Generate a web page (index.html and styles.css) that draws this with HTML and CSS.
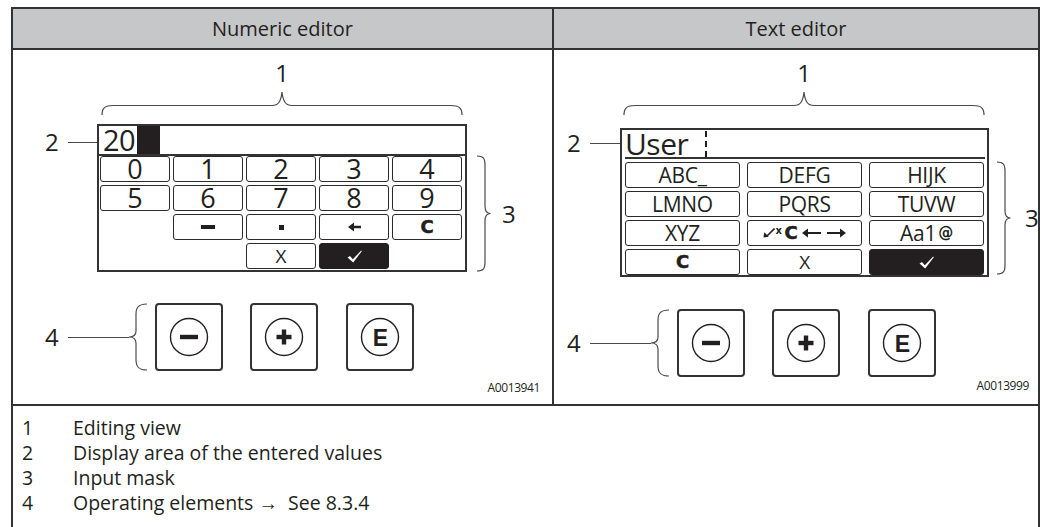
FILE: index.html
```html
<!DOCTYPE html>
<html lang="en">
  <head>
    <meta charset="UTF-8" />
    <meta name="viewport" content="width=device-width, initial-scale=1.0" />
    <title>Numeric editor and text editor</title>
    <link rel="stylesheet" href="styles.css">
  </head>
  <body>
    <div class="sheet">
      <div class="head">Numeric editor</div>
      <div class="head col-right">Text editor</div>

      <!-- numeric editor -->
      <div class="cell cell-numeric">
        <div class="figure">
          <div class="top-mark">
            <span class="callout">1</span>
            <svg class="brace-h" width="362" height="25" viewBox="0 0 362 25">
              <path d="M1 24 C1 17 4 14.5 12 14.5 L171 14.5 C177 14.5 180 11 181 1 C182 11 185 14.5 191 14.5 L350 14.5 C358 14.5 361 17 361 24" />
            </svg>
          </div>

          <div class="device">
            <div class="lead"><span class="callout">2</span><i class="leader"></i></div>
            <div class="screen">
              <div class="display">
                <span class="value">20</span><span class="cursor-block"></span>
              </div>
              <div class="keypad numpad">
                <div class="key">0</div>
                <div class="key">1</div>
                <div class="key">2</div>
                <div class="key">3</div>
                <div class="key">4</div>
                <div class="key">5</div>
                <div class="key">6</div>
                <div class="key">7</div>
                <div class="key">8</div>
                <div class="key">9</div>
                <div class="key blank"></div>
                <div class="key">
                  <svg width="14" height="4" viewBox="0 0 14 4"><rect width="14" height="4" /></svg>
                </div>
                <div class="key">
                  <svg width="5" height="5" viewBox="0 0 5 5"><rect width="5" height="5" /></svg>
                </div>
                <div class="key">
                  <svg width="13" height="10" viewBox="0 0 13 10"><path d="M0 5 L6 0.5 V3.8 H13 V6.2 H6 V9.5 Z" /></svg>
                </div>
                <div class="key"><span class="sym-c">C</span></div>
                <div class="key blank"></div>
                <div class="key blank"></div>
                <div class="key"><span class="sym-x">X</span></div>
                <div class="key enter">
                  <svg width="15" height="13" viewBox="0 0 15 13"><path d="M0.5 7.5 L3 6 L5.8 9.2 L14.2 0.6 L14.8 1.2 L6.2 12.5 Z" /></svg>
                </div>
              </div>
            </div>
            <div class="mask-mark">
              <svg class="brace-v" width="14" height="117" viewBox="0 0 14 117">
                <path d="M0 1 C6 1 8 3 8 10 L8 51 C8 56 10 58.5 13.5 58.5 C10 58.5 8 61 8 66 L8 107 C8 114 6 116 0 116" />
              </svg>
              <span class="callout">3</span>
            </div>
          </div>

          <div class="controls">
            <span class="callout">4</span><i class="leader long"></i>
            <svg class="brace-l" width="18" height="68" viewBox="0 0 18 68">
              <path d="M18 1 C10 1 7 4 7 11 L7 28 C7 32 5 34 0 34 C5 34 7 36 7 40 L7 57 C7 64 10 67 18 67" />
            </svg>
            <div class="op-btn">
              <svg width="40" height="40" viewBox="0 0 40 40">
                <circle cx="20" cy="20" r="18.5" class="ring" />
                <rect x="11" y="17.8" width="18" height="4.4" />
              </svg>
            </div>
            <div class="op-btn">
              <svg width="40" height="40" viewBox="0 0 40 40">
                <circle cx="20" cy="20" r="18.5" class="ring" />
                <rect x="12.5" y="17.8" width="15" height="4.4" />
                <rect x="17.8" y="12.5" width="4.4" height="15" />
              </svg>
            </div>
            <div class="op-btn">
              <svg width="40" height="40" viewBox="0 0 40 40">
                <circle cx="20" cy="20" r="18.5" class="ring" />
                <text x="20.5" y="28.5" class="op-letter">E</text>
              </svg>
            </div>
          </div>
        </div>
        <div class="fig-id">A0013941</div>
      </div>

      <!-- text editor -->
      <div class="cell cell-text col-right">
        <div class="figure">
          <div class="top-mark">
            <span class="callout">1</span>
            <svg class="brace-h" width="362" height="25" viewBox="0 0 362 25">
              <path d="M1 24 C1 17 4 14.5 12 14.5 L171 14.5 C177 14.5 180 11 181 1 C182 11 185 14.5 191 14.5 L350 14.5 C358 14.5 361 17 361 24" />
            </svg>
          </div>

          <div class="device">
            <div class="lead"><span class="callout">2</span><i class="leader"></i></div>
            <div class="screen">
              <div class="display">
                <span class="value">User</span><span class="cursor-dash"></span>
              </div>
              <div class="keypad textpad">
                <div class="key">ABC_</div>
                <div class="key">DEFG</div>
                <div class="key">HIJK</div>
                <div class="key">LMNO</div>
                <div class="key">PQRS</div>
                <div class="key">TUVW</div>
                <div class="key">XYZ</div>
                <div class="key tools">
                  <svg width="12" height="10" viewBox="0 0 12 10"><path d="M11.5 0.5 L4 8" class="stem" /><path d="M0.5 9.5 L1.2 4.2 L5.8 8.8 Z" /></svg><sup class="sym-sup">x</sup><span class="sym-c">C</span>
                  <svg width="44" height="10" viewBox="0 0 44 10"><path d="M0 5 L6 0.5 V4 H19 V6 H6 V9.5 Z" /><path d="M44 5 L38 0.5 V4 H25 V6 H38 V9.5 Z" /></svg>
                </div>
                <div class="key">Aa1<span class="sym-at">@</span></div>
                <div class="key"><span class="sym-c">C</span></div>
                <div class="key"><span class="sym-x">X</span></div>
                <div class="key enter">
                  <svg width="15" height="13" viewBox="0 0 15 13"><path d="M0.5 7.5 L3 6 L5.8 9.2 L14.2 0.6 L14.8 1.2 L6.2 12.5 Z" /></svg>
                </div>
              </div>
            </div>
            <div class="mask-mark">
              <svg class="brace-v" width="14" height="114" viewBox="0 0 14 114">
                <path d="M0 1 C6 1 8 3 8 10 L8 50 C8 55 10 57 13.5 57 C10 57 8 59 8 64 L8 104 C8 111 6 113 0 113" />
              </svg>
              <span class="callout">3</span>
            </div>
          </div>

          <div class="controls">
            <span class="callout">4</span><i class="leader long"></i>
            <svg class="brace-l" width="18" height="68" viewBox="0 0 18 68">
              <path d="M18 1 C10 1 7 4 7 11 L7 28 C7 32 5 34 0 34 C5 34 7 36 7 40 L7 57 C7 64 10 67 18 67" />
            </svg>
            <div class="op-btn">
              <svg width="40" height="40" viewBox="0 0 40 40">
                <circle cx="20" cy="20" r="18.5" class="ring" />
                <rect x="11" y="17.8" width="18" height="4.4" />
              </svg>
            </div>
            <div class="op-btn">
              <svg width="40" height="40" viewBox="0 0 40 40">
                <circle cx="20" cy="20" r="18.5" class="ring" />
                <rect x="12.5" y="17.8" width="15" height="4.4" />
                <rect x="17.8" y="12.5" width="4.4" height="15" />
              </svg>
            </div>
            <div class="op-btn">
              <svg width="40" height="40" viewBox="0 0 40 40">
                <circle cx="20" cy="20" r="18.5" class="ring" />
                <text x="20.5" y="28.5" class="op-letter">E</text>
              </svg>
            </div>
          </div>
        </div>
        <div class="fig-id">A0013999</div>
      </div>

      <div class="legend">
        <div class="legend-row"><span class="num">1</span><span>Editing view</span></div>
        <div class="legend-row"><span class="num">2</span><span>Display area of the entered values</span></div>
        <div class="legend-row"><span class="num">3</span><span>Input mask</span></div>
        <div class="legend-row"><span class="num">4</span><span>Operating elements &rarr;&nbsp; See 8.3.4</span></div>
      </div>
    </div>
  </body>
</html>
```

FILE: styles.css
```css
body {
  margin: 0;
  background: #fff;
  color: #231f20;
  font-family: "Open Sans", "Noto Sans", sans-serif;
  overflow: hidden;
}

.sheet {
  margin: 7px 0 0 11px;
  width: 1029px;
  box-sizing: border-box;
  border: 2px solid #333;
  border-bottom: 0;
  display: grid;
  grid-template-columns: 539px 486px;
}

.col-right {
  border-left: 2px solid #333;
}

.head {
  height: 41px;
  box-sizing: border-box;
  border-bottom: 2px solid #333;
  background: #c6c7c9;
  text-align: center;
  font-size: 20px;
  line-height: 39px;
}

.cell {
  height: 356px;
  box-sizing: border-box;
  border-bottom: 2px solid #333;
  display: flex;
  flex-direction: column;
}

.cell-numeric {
  padding: 11px 0 0 32px;
}

.cell-text {
  padding: 11px 0 0 13px;
}

.callout {
  font-size: 24px;
  line-height: 24px;
}

/* label 1 + brace over the screen */
.top-mark {
  margin-left: 56px;
  width: 362px;
  display: flex;
  flex-direction: column;
  align-items: center;
}

.brace-h {
  display: block;
  margin-top: 6px;
}

.brace-h path,
.brace-v path,
.brace-l path {
  fill: none;
  stroke: #4a4a4a;
  stroke-width: 1.2;
}

.device {
  display: grid;
  grid-template-columns: 52px 370px auto;
  align-items: start;
  margin-top: 8px;
}

.cell-text .device {
  grid-template-columns: 53px 369px auto;
  margin-top: 12px;
}

.lead {
  height: 36px;
  display: flex;
  align-items: center;
}

.cell-text .lead {
  height: 30px;
}

.leader {
  display: block;
  flex: 1;
  height: 0;
  margin-left: 9px;
  border-top: 1.2px solid #4a4a4a;
}

.leader.long {
  flex: none;
  width: 61px;
}

.mask-mark {
  align-self: end;
  display: flex;
  align-items: center;
  gap: 11px;
  margin-left: 10px;
}

.cell-text .mask-mark {
  gap: 14px;
  margin-left: 8px;
  margin-bottom: 2px;
}

.brace-v {
  display: block;
}

/* the device screen */
.screen {
  border: 2px solid #333;
  box-sizing: border-box;
  background: #fff;
}

.display {
  height: 28px;
  border-bottom: 2px solid #333;
  display: flex;
  align-items: stretch;
  padding-left: 4px;
}

.value {
  font-size: 29px;
  line-height: 28px;
  letter-spacing: -0.5px;
}

.cursor-block {
  width: 23px;
  margin-left: 2px;
  background: #231f20;
}

.cell-text .display {
  height: 27px;
  margin: 0 2px 0 3px;
  padding-left: 0;
}

.cell-text .value {
  font-size: 30px;
  line-height: 27px;
}

.cursor-dash {
  margin: 1px 0 0 17px;
  border-left: 2px dashed #231f20;
}

.keypad {
  display: grid;
  grid-auto-rows: 26px;
}

.numpad {
  grid-template-columns: repeat(5, 70px);
  gap: 3px;
  padding: 0 3px 1px 1px;
}

.textpad {
  grid-template-columns: repeat(3, 1fr);
  gap: 3px 7px;
  padding: 3px 3px 0 3px;
}

.key {
  border: 1px solid #2b2b2b;
  border-radius: 3px;
  display: flex;
  align-items: center;
  justify-content: center;
  line-height: 24px;
  white-space: nowrap;
}

.numpad .key {
  font-size: 27px;
}

.textpad .key {
  font-size: 21px;
  letter-spacing: -0.3px;
}

.key svg {
  fill: #231f20;
}

.key.blank {
  border-color: transparent;
}

.key.enter {
  background: #231f20;
  border-color: #231f20;
}

.key.enter svg {
  fill: #fff;
}

.sym-c {
  font-family: "DejaVu Sans", sans-serif;
  font-weight: bold;
  font-size: 18px;
  -webkit-text-stroke: 0.5px #231f20;
}

.sym-x {
  font-size: 19px;
  font-weight: 400;
}

.sym-at {
  font-family: "DejaVu Sans", sans-serif;
  font-weight: bold;
  font-size: 15px;
  margin-left: 2px;
}

.key.tools .stem {
  fill: none;
  stroke: #231f20;
  stroke-width: 1.6;
}

.sym-sup {
  font-family: "DejaVu Sans", sans-serif;
  font-weight: bold;
  font-size: 10px;
  line-height: 10px;
  align-self: flex-start;
  margin: 5px 3px 0 0;
}

.key.tools svg:last-child {
  margin-left: 4px;
}

/* operating elements */
.controls {
  display: flex;
  align-items: center;
  margin-top: 31px;
}

.cell-text .controls {
  margin-top: 32px;
}

.brace-l {
  display: block;
  margin-right: 8px;
}

.op-btn {
  width: 68px;
  height: 68px;
  box-sizing: border-box;
  border: 2px solid #333;
  border-radius: 4px;
  display: flex;
  align-items: center;
  justify-content: center;
  margin-right: 27.5px;
}

.op-btn svg {
  fill: #231f20;
}

.op-btn .ring {
  fill: none;
  stroke: #231f20;
  stroke-width: 1.4;
}

.op-letter {
  font-family: "Liberation Sans", sans-serif;
  font-weight: bold;
  font-size: 23px;
  text-anchor: middle;
}

.fig-id {
  margin-top: auto;
  align-self: flex-end;
  font-size: 12px;
  letter-spacing: -0.4px;
  margin-right: 12px;
  margin-bottom: 8px;
}

.cell-text .fig-id {
  margin-right: 9px;
  margin-bottom: 11px;
}

/* legend under the figures */
.legend {
  grid-column: 1 / -1;
  padding: 9px 0 12px 9px;
  font-size: 19.5px;
  line-height: 25px;
}

.legend-row {
  display: flex;
}

.legend-row .num {
  width: 51px;
}
```
